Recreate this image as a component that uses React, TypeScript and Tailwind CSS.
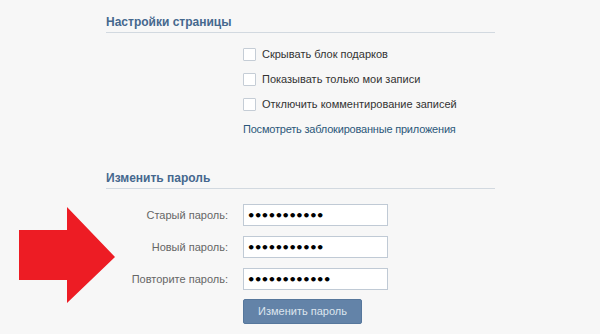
import React from 'react';

const checkboxes = [
	'Скрывать блок подарков',
	'Показывать только мои записи',
	'Отключить комментирование записей',
];

const passwords = [
	{ label: 'Старый пароль:', value: 'aaaaaaaaaaa' },
	{ label: 'Новый пароль:', value: 'aaaaaaaaaaa' },
	{ label: 'Повторите пароль:', value: 'aaaaaaaaaaaa' },
];

const SectionTitle: React.FC<{ title: string }> = ({ title }) => (
	<div className="border-b border-[#d2d9e0] pb-[2px]">
		<h2 className="text-[12px] leading-[16px] font-bold text-[#45688e]">{title}</h2>
	</div>
);

const App: React.FC = () => {
	return (
		<div className="relative h-[334px] w-[600px] overflow-hidden bg-[#f7f7f7] font-['Liberation_Sans',Arial,sans-serif] text-[11px]">
			<div className="ml-[106px] w-[389px] pt-[14px]">
				<SectionTitle title="Настройки страницы" />

				<div className="mt-[9px] pl-[137px]">
					{checkboxes.map((text) => (
						<div key={text} className="flex h-[25px] items-center gap-[6px]">
							<span className="h-[13px] w-[13px] rounded-[1px] border border-[#c5cdd6] bg-white" />
							<span className="text-[#333]">{text}</span>
						</div>
					))}
					<a href="#" className="mt-[4px] block leading-[16px] tracking-[-0.2px] text-[#2b587a]">
						Посмотреть заблокированные приложения
					</a>
				</div>

				<div className="mt-[33px]">
					<SectionTitle title="Изменить пароль" />
				</div>

				<div className="mt-[15px] flex flex-col gap-[10px]">
					{passwords.map((row) => (
						<div key={row.label} className="flex items-center">
							<label className="w-[122px] text-right text-[#666]">{row.label}</label>
							<input
								type="password"
								readOnly
								defaultValue={row.value}
								className="ml-[15px] h-[22px] w-[145px] border border-[#c0cad5] bg-white px-[3px] font-['DejaVu_Sans',sans-serif] text-[13px] font-bold tracking-[-1.4px] text-black outline-none"
							/>
						</div>
					))}
				</div>

				<div className="mt-[9px] pl-[137px]">
					<button className="h-[25px] w-[119px] rounded-[2px] border border-[#56779c] bg-[#6383a8] text-[11px] text-[#dde5ee]">
						Изменить пароль
					</button>
				</div>
			</div>

			<svg className="absolute left-0 top-0" width="130" height="334" viewBox="0 0 130 334">
				<polygon points="19,230 67,230 67,207 115,257 67,303 67,280 19,280" fill="#ed1c24" />
			</svg>
		</div>
	);
};

export default App;
